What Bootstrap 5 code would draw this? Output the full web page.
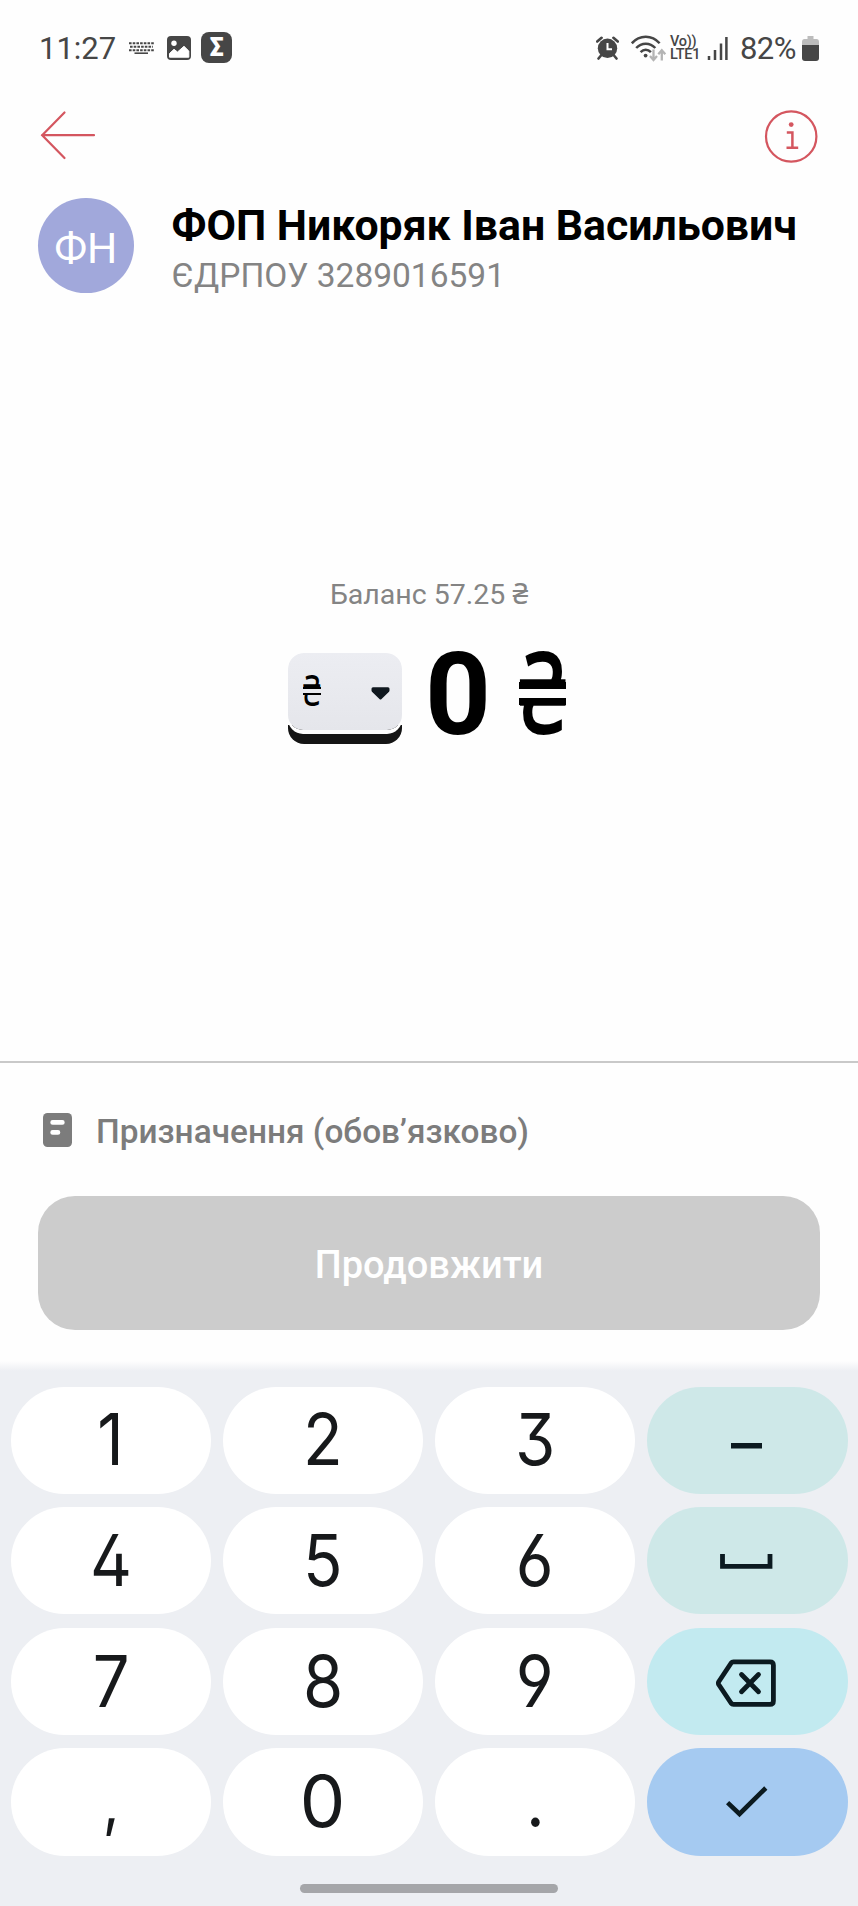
<!DOCTYPE html>
<html lang="uk">
<head>
<meta charset="utf-8">
<meta name="viewport" content="width=device-width, initial-scale=1">
<title>Переказ</title>
<link href="https://cdn.jsdelivr.net/npm/bootstrap@5.3.0/dist/css/bootstrap.min.css" rel="stylesheet">
<style>
body{font-family:Roboto,"Noto Sans",sans-serif;background:#fefefe;color:#000;width:858px;height:1906px;overflow:hidden}
svg{display:block;flex:none}
.line{white-space:nowrap;line-height:1;display:inline-block}
.statusbar{height:96px;padding:0 39px;color:#464646}
.clock{font-size:31px;width:90px;padding-top:1px}
.gallery{margin-left:13px}
.sigma{width:31px;height:31px;border-radius:8px;background:#464646;color:#fff;font-size:25px;font-weight:900;line-height:31px;margin:-1px 0 0 10px}
.volte{width:29px;font-size:14.5px;line-height:13.5px;font-weight:500;letter-spacing:-.3px;white-space:nowrap;margin:0 8px 0 3px}
.percent{font-size:31px;width:62px;padding-top:1px;letter-spacing:-.6px;margin-left:12px}
.topbar{height:101px;padding:14px 40px 0}
.profile{padding:0 38px;height:96px}
.avatar{width:95.5px;height:95.5px;margin-top:.5px;background:#a1a8db;color:#fff;font-size:42.5px;padding-top:7px}
.who{margin-left:38px;padding-top:6px}
.who-name{font-size:42.8px;font-weight:700;line-height:44px}
.who-code{font-size:33.5px;color:#848484;line-height:40px;margin-top:9px}
.amount-area{height:768px;padding-top:287px}
.balance{font-size:28.5px;color:#848484;line-height:30px}
.amount-row{margin-top:43px;padding-right:4px}
.cap-wrap{width:114px;height:91px;border-radius:16px;background:linear-gradient(transparent 72px,#151515 72px);overflow:hidden}
.keycap{width:114px;height:77px;border-radius:15px;background:linear-gradient(#ecedf2,#e5e6eb);box-shadow:0 4px 0 #fefefe;padding:23.5px 12px 0 15px}
.digits{font-size:115px;font-weight:700;line-height:84px;margin-left:23px;width:66px}
.hryvnia{display:inline-block;position:relative;width:.41em;height:.6em;line-height:.6em;font-family:"Noto Sans",sans-serif;text-align:left}
.hryvnia>span{display:inline-block;transform:scaleX(.74);transform-origin:0 0}
.hryvnia::after{content:"";position:absolute;left:0;right:0;top:.235em;height:.2em;background:linear-gradient(#000 .062em,var(--gap) .062em .138em,#000 .138em)}
.hryvnia-lg{font-size:115px;font-weight:500;margin:1.5px 0 0 28px;--gap:#fefefe}
.hryvnia-sm{font-size:43px;font-weight:400;--gap:#e9eaef}
.hryvnia-sm::after{background:linear-gradient(#000 .055em,var(--gap) .055em .145em,#000 .145em)}
.purpose{border-top:2px solid #c9c9c9;height:135px;color:#7c7c7c;padding-left:43px}
.purpose-text{font-size:33.4px;font-weight:500;margin-left:24px;padding-top:4px}
.go{margin:0 38px;width:782px;height:133.5px;border-radius:37px;background:#ccc;color:#fff;font-size:38px;font-weight:500;padding:4px 0 0;border:0}
.keyboard{margin-top:31.5px;height:545px;padding:25.5px 10.5px 0;background:linear-gradient(#fefefe,#edeff3 10px)}
.keys{display:grid;grid-template-columns:repeat(4,1fr);column-gap:11.5px;row-gap:13.2px}
.key{height:107.4px;border-radius:54px;border:0;background:#fff;color:#17191b;font-family:Inter,sans-serif;font-size:71.5px;font-weight:400;line-height:1;font-feature-settings:"ss01";display:flex;align-items:center;justify-content:center;padding:0}
.key span{transform:scaleX(.91)}
.key .zero{transform:scaleX(1.01)}
.key .comma{font-size:64px}
.key-soft{background:#cee8e8}
.key-erase{background:#c2eaf0}
.key-enter{background:#a5caf1}
.homebar{width:258px;height:9px;border-radius:5px;background:#a5a6a9;margin:28px auto 0}
</style>
</head>
<body>
<header class="statusbar d-flex align-items-center">
  <span class="line clock">11:27</span>
  <svg width="25" height="12" viewBox="0 0 25 12" stroke="#464646" fill="none"><path d="M0 1.2H25M1 4.7H24M0 8.2H25" stroke-width="2" stroke-dasharray="2.6 1.1"/><path d="M5.5 11.2H19" stroke-width="1.6"/></svg>
  <svg class="gallery" width="24" height="24" viewBox="0 0 24 24"><rect width="24" height="24" rx="4" fill="#464646"/><circle cx="7" cy="7.3" r="2.7" fill="#fff"/><path d="M2.5 17.5L7 13.3L10.5 16L17 10.3L21.8 15V21.2H2.5Z" fill="#fff" stroke="#fff" stroke-linejoin="round"/></svg>
  <span class="sigma text-center">Σ</span>
  <div class="d-flex align-items-center ms-auto">
    <svg width="23" height="24" viewBox="0 0 23 24"><circle cx="11.5" cy="12.3" r="9.7" fill="#464646"/><path d="M1.2 5.5L5.6 1.8M21.8 5.5L17.4 1.8M5 19.5L2.5 22.5M18 19.5L20.5 22.5" stroke="#464646" stroke-width="2.6" stroke-linecap="round"/><path d="M11.5 7V13.2H16" stroke="#fff" stroke-width="2" fill="none"/></svg>
    <svg style="margin-left:12px" width="36" height="27" viewBox="0 0 36 27" fill="none" stroke="#464646" stroke-width="2.5"><path d="M.8 8.3C8.5-.4 21-.4 28.6 8.3M5.2 13C10.5 7.3 19 7.3 24.3 13M9.6 17.2C12.7 14 16.8 14 19.9 17.2"/><circle cx="14.6" cy="20.6" r="1.9" fill="#464646" stroke="none"/><path d="M22.5 14.5V24.5M19 21L22.5 25L26 21M30.8 25.5V16M27.3 19.3L30.8 15.3L34.3 19.3" stroke="#b4b4b4" stroke-width="2.3"/></svg>
    <div class="volte">Vo))<br>LTE1</div>
    <svg width="21" height="23" viewBox="0 0 21 23" stroke="#464646" stroke-width="2.5"><path d="M2 19V23M8 13V23M14 6.5V23M19.4 0V23"/></svg>
    <span class="line percent">82%</span>
    <svg width="17" height="25" viewBox="0 0 17 25"><path d="M5.5 0H11.5V3H14.5Q17 3 17 6V10H0V6Q0 3 2.5 3H5.5Z" fill="#bcbcbc"/><path d="M0 9H17V22Q17 25 14 25H3Q0 25 0 22Z" fill="#464646"/></svg>
  </div>
</header>

<nav class="topbar d-flex justify-content-between align-items-start">
  <svg width="56" height="50" viewBox="0 0 56 50" fill="none" stroke="#d4565f" stroke-width="2.2" stroke-linecap="round"><path d="M2 25.2H54M24.5 2.5L2.2 25.2L24.5 48"/></svg>
  <svg width="54" height="54" viewBox="0 0 54 54" fill="none" stroke="#d4565f" stroke-width="2.2"><circle cx="27.2" cy="26.5" r="25.2"/><circle cx="27.2" cy="14.6" r="2.4" fill="#d4565f" stroke="none"/><path d="M22.8 22.6H28.4V37.8M22.5 37.8H34.2" stroke-width="2.5"/></svg>
</nav>

<section class="profile d-flex">
  <div class="avatar rounded-circle d-flex align-items-center justify-content-center"><span class="line">ФН</span></div>
  <div class="who">
    <div class="who-name"><span class="line">ФОП Никоряк Іван Васильович</span></div>
    <div class="who-code"><span class="line">ЄДРПОУ 3289016591</span></div>
  </div>
</section>

<main class="amount-area text-center">
  <div class="balance"><span class="line">Баланс 57.25 ₴</span></div>
  <div class="amount-row d-flex justify-content-center align-items-start">
    <div class="cap-wrap"><div class="keycap d-flex justify-content-between align-items-start">
      <span class="hryvnia hryvnia-sm"><span>₴</span></span>
      <svg style="margin-top:10px" width="19" height="13" viewBox="0 0 19 13"><path d="M2 1.8H17V3.6L9.5 10.8L2 3.6Z" fill="#10181f" stroke="#10181f" stroke-width="3" stroke-linejoin="round"/></svg>
    </div></div>
    <span class="digits">0</span>
    <span class="hryvnia hryvnia-lg"><span>₴</span></span>
  </div>
</main>

<div class="purpose d-flex align-items-center">
  <svg width="29" height="34" viewBox="0 0 29 34"><rect width="29" height="34" rx="4.5" fill="#7c7c7c"/><path d="M9.6 9.4H19.4M9.6 19.4H15" stroke="#fff" stroke-width="4.6" stroke-linecap="round"/></svg>
  <span class="purpose-text line">Призначення (обов’язково)</span>
</div>
<button class="go d-flex align-items-center justify-content-center"><span class="line">Продовжити</span></button>

<section class="keyboard">
  <div class="keys">
    <button class="key"><span>1</span></button><button class="key"><span>2</span></button><button class="key"><span>3</span></button>
    <button class="key key-soft"><svg width="33" height="6" style="margin-top:12px"><rect width="31" height="5.5" fill="#0b1a20"/></svg></button>
    <button class="key"><span>4</span></button><button class="key"><span>5</span></button><button class="key"><span>6</span></button>
    <button class="key key-soft"><svg width="54" height="15" viewBox="0 0 54 15" style="margin-top:2px" fill="none" stroke="#0b1a20" stroke-width="4.8"><path d="M2.5 0V12.3H50V0"/></svg></button>
    <button class="key"><span>7</span></button><button class="key"><span>8</span></button><button class="key"><span>9</span></button>
    <button class="key key-erase"><svg width="63" height="48" viewBox="0 0 63 48" style="margin-top:4px" fill="none" stroke="#0b1a20" stroke-width="4.8" stroke-linecap="round" stroke-linejoin="round"><path d="M17.5 2.8H54Q57.4 2.8 57.4 6.2V42Q57.4 45.4 54 45.4H17.5Q16 45.4 15 44L2.7 25.5Q2 24.2 2.7 22.8L15 4.2Q16 2.8 17.5 2.8Z"/><path d="M25.5 15.5L42.5 32.8M42.5 15.5L25.5 32.8"/></svg></button>
    <button class="key"><span class="comma">,</span></button><button class="key"><span class="zero">0</span></button><button class="key"><span>.</span></button>
    <button class="key key-enter"><svg width="43" height="32" viewBox="0 0 43 32" fill="none" stroke="#0b1a20" stroke-width="4.6"><path d="M1.6 16.6L13.5 28L39.8 2"/></svg></button>
  </div>
  <div class="homebar"></div>
</section>
<script src="https://cdn.jsdelivr.net/npm/bootstrap@5.3.0/dist/js/bootstrap.bundle.min.js"></script>
</body>
</html>
